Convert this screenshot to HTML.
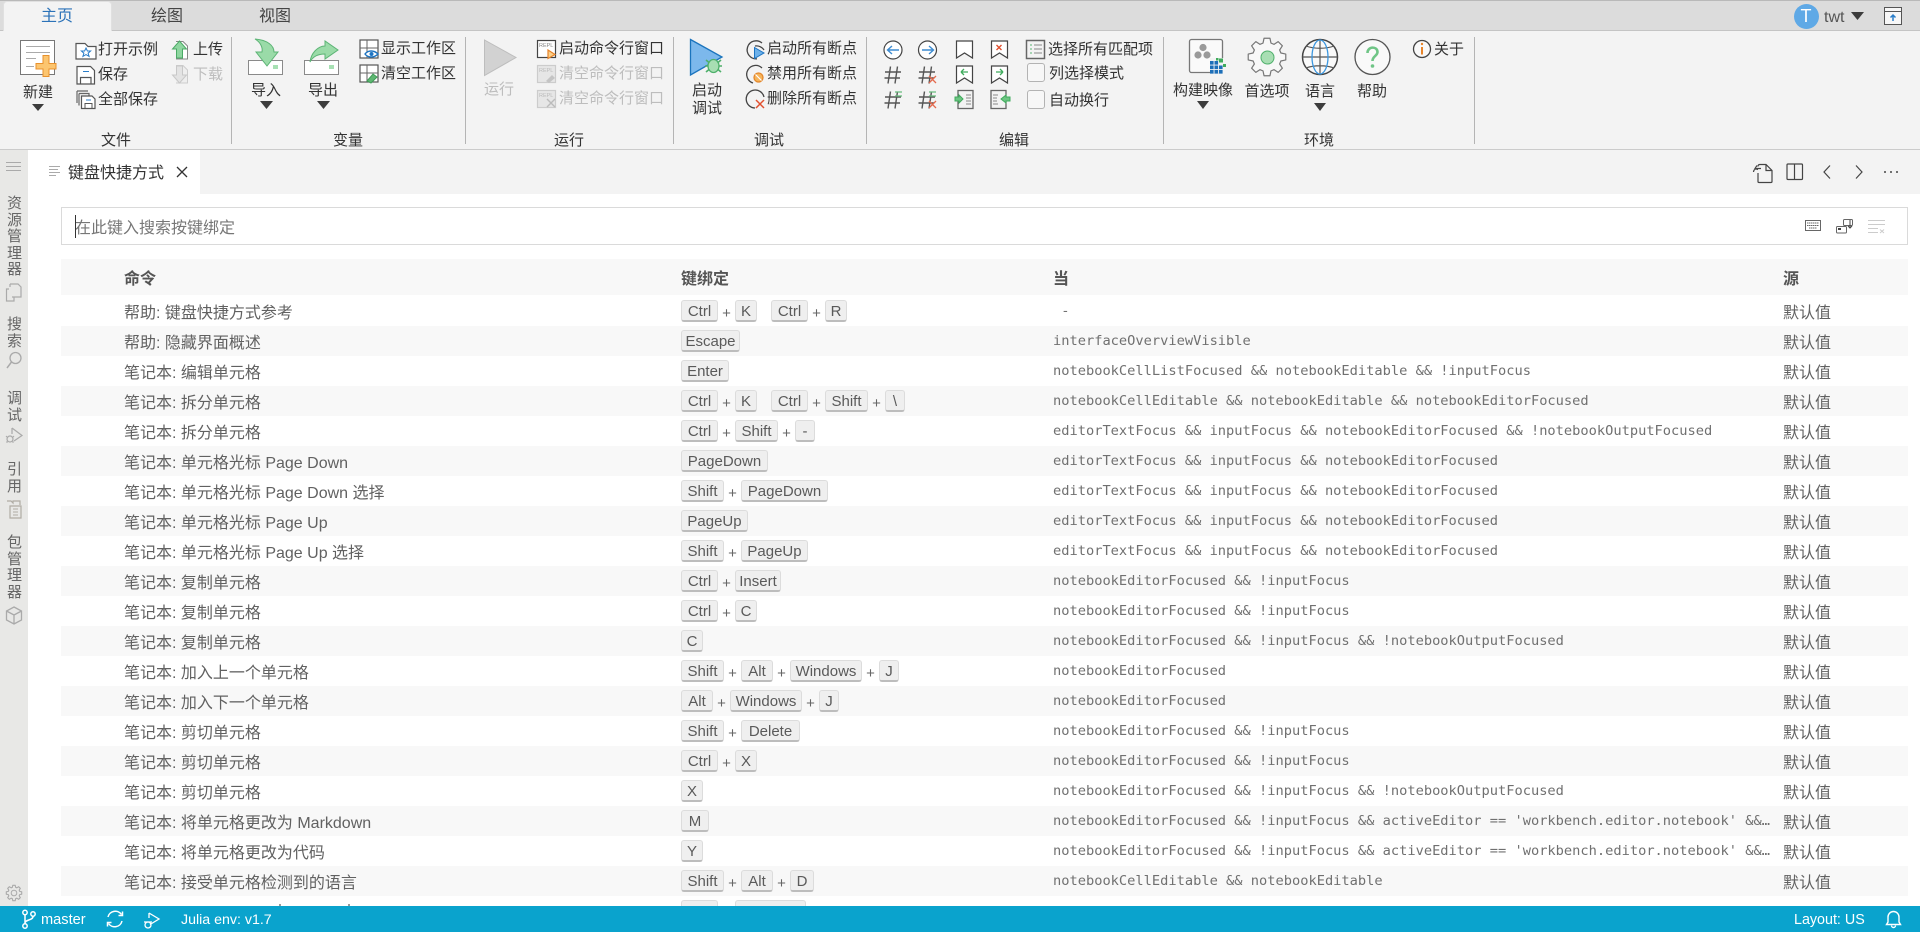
<!DOCTYPE html>
<html lang="zh"><head><meta charset="utf-8"><title>键盘快捷方式</title>
<style>
html,body{margin:0;padding:0;width:1920px;height:932px;overflow:hidden;background:#fff;font-family:"Liberation Sans","Noto Sans CJK SC",sans-serif}
.a{position:absolute}
.t{position:absolute;white-space:nowrap;line-height:20px;height:20px;font-size:15px;color:#333}
.c{transform:translateX(-50%)}
.g{color:#bdbdbd}
.r{position:absolute;left:61px;width:1847px;height:30px;line-height:30px;font-size:16px;color:#616161;overflow:hidden}
.e{background:#f8f8f8}
.r>*{position:absolute;white-space:nowrap}
.n{left:63px;top:3px}
.b{left:620px;top:4px;display:flex;align-items:flex-start}
.w{left:992px;font:13.7px/30px "DejaVu Sans Mono",monospace;color:#707070;white-space:pre!important}
.s{left:1722px;top:3px}
.h{font-weight:bold;color:#555;top:2px}
.k{display:block;box-sizing:border-box;height:22px;line-height:21px;text-align:center;background:#efefef;border:1px solid #dcdcdc;border-bottom:2px solid #bdbdbd;border-radius:3px;font-size:15px;color:#5a5a5a;font-weight:400;font-style:normal}
.p{display:block;width:17px;text-align:center;font-size:15px;line-height:27px;color:#666;font-weight:400;font-style:normal}
.g14{display:block;width:14px}
.v{position:absolute;left:6px;width:17px;text-align:center;font-size:15px;line-height:16.5px;color:#666}
</style></head><body>

<!-- tab strip -->
<div class="a" style="left:0;top:0;width:1920px;height:30px;background:#dcdcdc;border-top:1px solid #b9b9b9;box-sizing:border-box"></div>
<div class="a" style="left:0;top:30px;width:1920px;height:1px;background:#c4c4c4"></div>
<div class="a" style="left:4px;top:2px;width:107px;height:29px;background:#f3f3f3;border-radius:3px 3px 0 0;box-shadow:0 0 0 1px #e0e0e0"></div>
<div class="t c" style="left:57px;top:7px;font-size:16px;color:#2b72b8">主页</div>
<div class="t c" style="left:167px;top:7px;font-size:16px;color:#444">绘图</div>
<div class="t c" style="left:275px;top:7px;font-size:16px;color:#444">视图</div>
<div class="a" style="left:1793.5px;top:4px;width:25px;height:25px;border-radius:50%;background:#5fa9e6;color:#fff;font-size:18px;line-height:25px;text-align:center">T</div>
<div class="t" style="left:1824px;top:8px;font-size:16px;color:#555">twt</div>

<!-- ribbon -->
<div class="a" style="left:0;top:31px;width:1920px;height:118px;background:#f3f3f3"></div>
<div class="a" style="left:0;top:149px;width:1920px;height:1px;background:#cbcbcb"></div>
<div class="a" style="left:231px;top:37px;width:1px;height:107px;background:#b4b4b4"></div>
<div class="a" style="left:465px;top:37px;width:1px;height:107px;background:#b4b4b4"></div>
<div class="a" style="left:673px;top:37px;width:1px;height:107px;background:#b4b4b4"></div>
<div class="a" style="left:866px;top:37px;width:1px;height:107px;background:#b4b4b4"></div>
<div class="a" style="left:1163px;top:37px;width:1px;height:107px;background:#b4b4b4"></div>
<div class="a" style="left:1474px;top:37px;width:1px;height:107px;background:#b4b4b4"></div>

<div class="t c" style="left:38px;top:83px">新建</div>
<div class="t" style="left:98px;top:40px">打开示例</div>
<div class="t" style="left:98px;top:65px">保存</div>
<div class="t" style="left:98px;top:90px">全部保存</div>
<div class="t" style="left:193px;top:40px">上传</div>
<div class="t g" style="left:193px;top:65px">下载</div>
<div class="t c" style="left:116px;top:131px">文件</div>
<div class="t c" style="left:266px;top:81px">导入</div>
<div class="t c" style="left:323px;top:81px">导出</div>
<div class="t" style="left:381px;top:39px">显示工作区</div>
<div class="t" style="left:381px;top:64px">清空工作区</div>
<div class="t c" style="left:348px;top:131px">变量</div>
<div class="t c g" style="left:499px;top:80px">运行</div>
<div class="t" style="left:559px;top:39px">启动命令行窗口</div>
<div class="t g" style="left:559px;top:64px">清空命令行窗口</div>
<div class="t g" style="left:559px;top:89px">清空命令行窗口</div>
<div class="t c" style="left:569px;top:131px">运行</div>
<div class="t c" style="left:707px;top:81px">启动</div>
<div class="t c" style="left:707px;top:99px">调试</div>
<div class="t" style="left:767px;top:39px">启动所有断点</div>
<div class="t" style="left:767px;top:64px">禁用所有断点</div>
<div class="t" style="left:767px;top:89px">删除所有断点</div>
<div class="t c" style="left:769px;top:131px">调试</div>
<div class="t" style="left:1048px;top:40px">选择所有匹配项</div>
<div class="t" style="left:1049px;top:64px">列选择模式</div>
<div class="t" style="left:1049px;top:91px">自动换行</div>
<div class="t c" style="left:1014px;top:131px">编辑</div>
<div class="t c" style="left:1203px;top:81px">构建映像</div>
<div class="t c" style="left:1267px;top:82px">首选项</div>
<div class="t c" style="left:1320px;top:82px">语言</div>
<div class="t c" style="left:1372px;top:82px">帮助</div>
<div class="t" style="left:1434px;top:40px">关于</div>
<div class="t c" style="left:1319px;top:131px">环境</div>

<!-- tab bar -->
<div class="a" style="left:28px;top:150px;width:1892px;height:44px;background:#f3f3f3"></div>
<div class="a" style="left:28px;top:150px;width:172px;height:44px;background:#fff"></div>
<div class="t" style="left:68px;top:164px;font-size:16px;color:#333">键盘快捷方式</div>

<!-- search -->
<div class="a" style="left:61px;top:207px;width:1847px;height:38px;box-sizing:border-box;border:1px solid #dadada;background:#fff"></div>
<div class="t" style="left:75px;top:219px;font-size:16px;color:#777">在此键入搜索按键绑定</div>
<div class="a" style="left:75px;top:215px;width:1px;height:23px;background:#333"></div>

<!-- table -->
<div class="r e" style="top:259px;height:36px;line-height:37px"><span class="n h">命令</span><span class="h" style="left:620px">键绑定</span><span class="h" style="left:992px">当</span><span class="s h">源</span></div>

<div class="r" style="top:296px"><span class="n">帮助: 键盘快捷方式参考</span><span class="b"><b class="k" style="width:37px">Ctrl</b><b class="p">+</b><b class="k" style="width:22px">K</b><i class="g14"></i><b class="k" style="width:37px">Ctrl</b><b class="p">+</b><b class="k" style="width:22px">R</b></span><span class="w"> -</span><span class="s">默认值</span></div>

<div class="r e" style="top:326px"><span class="n">帮助: 隐藏界面概述</span><span class="b"><b class="k" style="width:59px">Escape</b></span><span class="w">interfaceOverviewVisible</span><span class="s">默认值</span></div>

<div class="r" style="top:356px"><span class="n">笔记本: 编辑单元格</span><span class="b"><b class="k" style="width:48px">Enter</b></span><span class="w">notebookCellListFocused &amp;&amp; notebookEditable &amp;&amp; !inputFocus</span><span class="s">默认值</span></div>

<div class="r e" style="top:386px"><span class="n">笔记本: 拆分单元格</span><span class="b"><b class="k" style="width:37px">Ctrl</b><b class="p">+</b><b class="k" style="width:22px">K</b><i class="g14"></i><b class="k" style="width:37px">Ctrl</b><b class="p">+</b><b class="k" style="width:43px">Shift</b><b class="p">+</b><b class="k" style="width:20px">\</b></span><span class="w">notebookCellEditable &amp;&amp; notebookEditable &amp;&amp; notebookEditorFocused</span><span class="s">默认值</span></div>

<div class="r" style="top:416px"><span class="n">笔记本: 拆分单元格</span><span class="b"><b class="k" style="width:37px">Ctrl</b><b class="p">+</b><b class="k" style="width:43px">Shift</b><b class="p">+</b><b class="k" style="width:20px">-</b></span><span class="w">editorTextFocus &amp;&amp; inputFocus &amp;&amp; notebookEditorFocused &amp;&amp; !notebookOutputFocused</span><span class="s">默认值</span></div>

<div class="r e" style="top:446px"><span class="n">笔记本: 单元格光标 Page Down</span><span class="b"><b class="k" style="width:87px">PageDown</b></span><span class="w">editorTextFocus &amp;&amp; inputFocus &amp;&amp; notebookEditorFocused</span><span class="s">默认值</span></div>

<div class="r" style="top:476px"><span class="n">笔记本: 单元格光标 Page Down 选择</span><span class="b"><b class="k" style="width:43px">Shift</b><b class="p">+</b><b class="k" style="width:87px">PageDown</b></span><span class="w">editorTextFocus &amp;&amp; inputFocus &amp;&amp; notebookEditorFocused</span><span class="s">默认值</span></div>

<div class="r e" style="top:506px"><span class="n">笔记本: 单元格光标 Page Up</span><span class="b"><b class="k" style="width:67px">PageUp</b></span><span class="w">editorTextFocus &amp;&amp; inputFocus &amp;&amp; notebookEditorFocused</span><span class="s">默认值</span></div>

<div class="r" style="top:536px"><span class="n">笔记本: 单元格光标 Page Up 选择</span><span class="b"><b class="k" style="width:43px">Shift</b><b class="p">+</b><b class="k" style="width:67px">PageUp</b></span><span class="w">editorTextFocus &amp;&amp; inputFocus &amp;&amp; notebookEditorFocused</span><span class="s">默认值</span></div>

<div class="r e" style="top:566px"><span class="n">笔记本: 复制单元格</span><span class="b"><b class="k" style="width:37px">Ctrl</b><b class="p">+</b><b class="k" style="width:46px">Insert</b></span><span class="w">notebookEditorFocused &amp;&amp; !inputFocus</span><span class="s">默认值</span></div>

<div class="r" style="top:596px"><span class="n">笔记本: 复制单元格</span><span class="b"><b class="k" style="width:37px">Ctrl</b><b class="p">+</b><b class="k" style="width:22px">C</b></span><span class="w">notebookEditorFocused &amp;&amp; !inputFocus</span><span class="s">默认值</span></div>

<div class="r e" style="top:626px"><span class="n">笔记本: 复制单元格</span><span class="b"><b class="k" style="width:22px">C</b></span><span class="w">notebookEditorFocused &amp;&amp; !inputFocus &amp;&amp; !notebookOutputFocused</span><span class="s">默认值</span></div>

<div class="r" style="top:656px"><span class="n">笔记本: 加入上一个单元格</span><span class="b"><b class="k" style="width:43px">Shift</b><b class="p">+</b><b class="k" style="width:32px">Alt</b><b class="p">+</b><b class="k" style="width:72px">Windows</b><b class="p">+</b><b class="k" style="width:20px">J</b></span><span class="w">notebookEditorFocused</span><span class="s">默认值</span></div>

<div class="r e" style="top:686px"><span class="n">笔记本: 加入下一个单元格</span><span class="b"><b class="k" style="width:32px">Alt</b><b class="p">+</b><b class="k" style="width:72px">Windows</b><b class="p">+</b><b class="k" style="width:20px">J</b></span><span class="w">notebookEditorFocused</span><span class="s">默认值</span></div>

<div class="r" style="top:716px"><span class="n">笔记本: 剪切单元格</span><span class="b"><b class="k" style="width:43px">Shift</b><b class="p">+</b><b class="k" style="width:59px">Delete</b></span><span class="w">notebookEditorFocused &amp;&amp; !inputFocus</span><span class="s">默认值</span></div>

<div class="r e" style="top:746px"><span class="n">笔记本: 剪切单元格</span><span class="b"><b class="k" style="width:37px">Ctrl</b><b class="p">+</b><b class="k" style="width:22px">X</b></span><span class="w">notebookEditorFocused &amp;&amp; !inputFocus</span><span class="s">默认值</span></div>

<div class="r" style="top:776px"><span class="n">笔记本: 剪切单元格</span><span class="b"><b class="k" style="width:22px">X</b></span><span class="w">notebookEditorFocused &amp;&amp; !inputFocus &amp;&amp; !notebookOutputFocused</span><span class="s">默认值</span></div>

<div class="r e" style="top:806px"><span class="n">笔记本: 将单元格更改为 Markdown</span><span class="b"><b class="k" style="width:28px">M</b></span><span class="w">notebookEditorFocused &amp;&amp; !inputFocus &amp;&amp; activeEditor == 'workbench.editor.notebook' &amp;&amp;…</span><span class="s">默认值</span></div>

<div class="r" style="top:836px"><span class="n">笔记本: 将单元格更改为代码</span><span class="b"><b class="k" style="width:22px">Y</b></span><span class="w">notebookEditorFocused &amp;&amp; !inputFocus &amp;&amp; activeEditor == 'workbench.editor.notebook' &amp;&amp;…</span><span class="s">默认值</span></div>

<div class="r e" style="top:866px"><span class="n">笔记本: 接受单元格检测到的语言</span><span class="b"><b class="k" style="width:43px">Shift</b><b class="p">+</b><b class="k" style="width:32px">Alt</b><b class="p">+</b><b class="k" style="width:24px">D</b></span><span class="w">notebookCellEditable &amp;&amp; notebookEditable</span><span class="s">默认值</span></div>

<div class="r" style="top:896px"><span class="b"><b class="k" style="width:37px;color:transparent">Ctrl</b><b class="p" style="color:transparent">+</b><b class="k" style="width:71px;color:transparent">Windows</b></span></div>
<div class="a" style="left:279px;top:904px;width:2px;height:2px;background:#999"></div>
<div class="a" style="left:348px;top:904px;width:2px;height:2px;background:#999"></div>

<!-- activity bar -->
<div class="a" style="left:0;top:150px;width:28px;height:756px;background:#e8e8e6"></div>
<div class="v" style="top:196px">资<br>源<br>管<br>理<br>器</div>
<div class="v" style="top:317px">搜<br>索</div>
<div class="v" style="top:391px">调<br>试</div>
<div class="v" style="top:462px">引<br>用</div>
<div class="v" style="top:535px">包<br>管<br>理<br>器</div>

<!-- status bar -->
<div class="a" style="left:0;top:906px;width:1920px;height:26px;background:#0aa3cd"></div>
<div class="t" style="left:41px;top:910px;color:#fff;font-size:14.6px">master</div>
<div class="t" style="left:181px;top:910px;color:#fff;font-size:14.2px">Julia env: v1.7</div>
<div class="t" style="left:1794px;top:910px;color:#fff;font-size:14.3px">Layout: US</div>

<!-- icon overlay -->
<svg class="a" style="left:0;top:0;pointer-events:none" width="1920" height="932" viewBox="0 0 1920 932" fill="none">
<defs>
<g id="hs" stroke="#555" stroke-width="1.4"><path d="M-2.5-8.5L-5 8.5M4.5-8.5L2 8.5M-8-3H8M-8.500 3H7"/></g>
<g id="gr"><polygon stroke-linejoin="round" points="7.3,-2.1 9.88,-1.56 9.88,1.56 7.3,2.1 6.65,3.68 8.09,5.88 5.88,8.09 3.68,6.65 2.1,7.3 1.56,9.88 -1.56,9.88 -2.1,7.3 -3.68,6.65 -5.88,8.09 -8.09,5.88 -6.65,3.68 -7.3,2.1 -9.88,1.56 -9.88,-1.56 -7.3,-2.1 -6.65,-3.68 -8.09,-5.88 -5.88,-8.09 -3.68,-6.65 -2.1,-7.3 -1.56,-9.88 1.56,-9.88 2.1,-7.3 3.68,-6.65 5.88,-8.09 8.09,-5.88 6.65,-3.68" vector-effect="non-scaling-stroke"/></g>
</defs>

<!-- carets -->
<path d="M32 104h12l-6 7zM260 101h13l-6.500 8zM317 101h13l-6.500 8zM1197 101h12l-6 8zM1314 103h12l-6 8zM1851 12h13l-6.500 8z" fill="#3c3c3c"/>

<!-- window icon top-right -->
<rect x="1884.500" y="7.500" width="17" height="17" stroke="#555" fill="#f7f7f7"/><path d="M1885 11.500h16" stroke="#555"/><path d="M1893 21v-6M1890.500 17.500l2.500-2.500 2.500 2.500" stroke="#2a7dc9" stroke-width="1.500"/>

<!-- new -->
<rect x="20.500" y="40.500" width="34" height="34" fill="#fff" stroke="#777"/><path d="M26 46.500h24M26 52.500h24M26 58.500h10M26 66.500h8" stroke="#aaa"/>
<path d="M43 55.500h6v8h7v5.500h-7v7.500h-6v-7.500h-7v-5.500h7z" fill="#fcc56f" stroke="#e8912d"/>

<!-- open sample -->
<path d="M76 43.500h9l3 3h8v12.500H76z" fill="#fff" stroke="#555" stroke-width="1.200"/><path d="M86 48l1.400 3h3.200l-2.500 2.200 1 3.200-3.100-1.800-3.100 1.800 1-3.200-2.500-2.200h3.200z" stroke="#2a7dc9"/>
<!-- save -->
<path d="M77 66.500h13.500l4 4v13.500H77z" fill="#fff" stroke="#555" stroke-width="1.200"/><path d="M83 71.500h6" stroke="#2a7dc9"/><path d="M80.500 84v-6.500h10.500V84" stroke="#555" stroke-width="1.200"/>
<!-- save all -->
<path d="M77 91h11M77 91v12M79 93.500h10v2M79 93.500v12" stroke="#666" stroke-width="1.200"/><path d="M81.500 96h10.500l3 3v9.500H81.500z" fill="#fff" stroke="#555" stroke-width="1.200"/><path d="M86 100h5" stroke="#2a7dc9"/><path d="M85 108.500v-5h7v5" stroke="#555"/>
<!-- upload -->
<path d="M176 41.500h7l4.500 4.500v13h-11.500" fill="#fff" stroke="#888"/><path d="M179.500 41l-7 8h4v9h6v-9h4z" fill="#8fd6a0" stroke="#4bab66"/>
<!-- download -->
<path d="M176 65.500h7l4.500 4.500v13h-11.500" stroke="#ccc" fill="#eee"/><path d="M179.500 83l-7-8h4v-9h6v9h4z" fill="#e3e3e3" stroke="#c8c8c8"/>

<!-- import -->
<rect x="248.500" y="60.500" width="34" height="14" fill="#fff" stroke="#8a8a8a"/><rect x="273" y="65" width="5" height="4" fill="#a7e0b3"/>
<path d="M255 39C268 40 274 46 274 52h4l-11 14-11-14h6C263 47 260 42 255 39z" fill="#9adba8" stroke="#5cb475"/>
<!-- export -->
<rect x="304.500" y="60.500" width="34" height="14" fill="#fff" stroke="#8a8a8a"/><rect x="329" y="65" width="5" height="4" fill="#a7e0b3"/>
<path d="M310 62C311 53 318 46 325 46V41L338 50 325 59V54C319 54 313 56 310 62z" fill="#9adba8" stroke="#5cb475"/>
<!-- show workspace -->
<rect x="360" y="40" width="18" height="18" fill="#fff" stroke="#555" stroke-width="1.200"/><path d="M367 40v18M360 48h18" stroke="#666"/>
<path d="M365 54c3-4 9-4 13 0-4 4-10 4-13 0z" fill="#fff" stroke="#1d74c2" stroke-width="1.400"/><circle cx="371.500" cy="54" r="2" fill="#1d74c2"/>
<!-- clear workspace -->
<rect x="360" y="65" width="18" height="17" fill="#fff" stroke="#555" stroke-width="1.200"/><path d="M367 65v17M360 73h18" stroke="#666"/>
<path d="M373 74l4 3-6 6-4-2z" fill="#5fb672" stroke="#3f9c57"/>

<!-- run -->
<polygon points="484.500,40 516,57.500 484.500,75.500" fill="#d2d2d2" stroke="#bdbdbd"/>
<!-- REPL -->
<rect x="537.500" y="40.500" width="18" height="17" fill="#fff" stroke="#444" stroke-width="1.200"/><text x="539" y="47" font-size="5.500" fill="#888" font-family="Liberation Sans">REPL</text><path d="M548 50l7 4.500-7 4z" fill="#fbd08a" stroke="#e8842a" stroke-width="1.200"/>
<rect x="537.500" y="65.500" width="18" height="17" fill="#e6e6e6" stroke="#ccc" stroke-width="1.200"/><text x="539" y="72" font-size="5.500" fill="#bbb" font-family="Liberation Sans">REPL</text><path d="M546 81l6-6 3 3-6 5z" fill="#c4c4c4"/>
<rect x="537.500" y="90.500" width="18" height="17" fill="#e6e6e6" stroke="#ccc" stroke-width="1.200"/><text x="539" y="97" font-size="5.500" fill="#bbb" font-family="Liberation Sans">REPL</text><path d="M547 99l8 8M555 99l-8 8" stroke="#bbb" stroke-width="1.400"/>

<!-- debug -->
<polygon points="690.500,39.500 722,57 690.500,75" fill="#7cb8ec" stroke="#1b74bd" stroke-width="1.300"/>
<ellipse cx="713.500" cy="66" rx="5.500" ry="6.500" fill="#a8deb3" stroke="#4fb06b" stroke-width="1.300"/><path d="M706 60l3 2.500M721 60l-3 2.500M705 66h3M719 66h3M706 72l3-2.500M721 72l-3-2.500" stroke="#4fb06b" stroke-width="1.600"/>

<!-- breakpoints -->
<path d="M762 43a9 9 0 1 0-5 15.800" stroke="#444" stroke-width="1.300"/><path d="M755 46a9 9 0 0 1 9 4" stroke="#444" stroke-width="1.300"/><path d="M754.500 47.500l9.500 5.500-9.500 5.500z" fill="#6db1ea" stroke="#1d74c2"/>
<path d="M762 68a9 9 0 1 0-9 15" stroke="#444" stroke-width="1.300"/><circle cx="758.500" cy="77.500" r="4.500" fill="#f6b45a" stroke="#e4872b" stroke-width="1.300"/><path d="M755.500 74.500l6 6" stroke="#fff" stroke-width="1.200"/>
<path d="M764 97a9 9 0 1 0-9 11" stroke="#444" stroke-width="1.300"/><path d="M756 100l8 8M764 100l-8 8" stroke="#e1502f" stroke-width="1.500"/>

<!-- nav -->
<circle cx="893" cy="50" r="9" fill="#fff" stroke="#444" stroke-width="1.200"/><path d="M899 50h-11M892 46l-4.500 4 4.500 4" stroke="#3d8bd0" stroke-width="1.400"/>
<circle cx="927.500" cy="50" r="9" fill="#fff" stroke="#444" stroke-width="1.200"/><path d="M922 50h11M929 46l4.500 4-4.500 4" stroke="#3d8bd0" stroke-width="1.400"/>
<use href="#hs" x="893" y="75"/><use href="#hs" x="927" y="75"/><path d="M929 76l7 7M936 76l-7 7" stroke="#e46a4e" stroke-width="1.300"/>
<use href="#hs" x="893" y="100"/><path d="M895 92h7M895 96h7" stroke="#67bd7d" stroke-width="1.300"/>
<use href="#hs" x="927" y="100"/><path d="M929 92h7M929 96h7" stroke="#67bd7d" stroke-width="1.300"/><path d="M929 101l7 7M936 101l-7 7" stroke="#e46a4e" stroke-width="1.300"/>

<!-- bookmarks -->
<g stroke="#444" stroke-width="1.200" fill="#fff">
<path d="M956.500 41h16v17l-8-5-8 5z"/><path d="M991.500 41h16v17l-8-5-8 5z"/>
<path d="M956.500 66h16v17l-8-5-8 5z"/><path d="M991.500 66h16v17l-8-5-8 5z"/>
</g>
<path d="M996.500 45l5 5M1001.500 45l-5 5" stroke="#e1502f" stroke-width="1.400"/>
<path d="M961 72h7M961 72l3-3M961 72l3 3" stroke="#3fab5c" stroke-width="1.300"/><path d="M996 72h7M1003 72l-3-3M1003 72l-3 3" stroke="#3fab5c" stroke-width="1.300"/>
<rect x="958" y="90.500" width="15" height="18" fill="#f3f3f3" stroke="#666" stroke-width="1.300"/><path d="M966 95h5M966 98h5M966 101h5M966 104h5" stroke="#888"/><path d="M955 97h4v-2l4 4-4 4v-2h-4z" fill="#6dc583" stroke="#3fab5c"/>
<rect x="991" y="90.500" width="15" height="18" fill="#f3f3f3" stroke="#666" stroke-width="1.300"/><path d="M993 95h5M993 98h4M993 101h4M993 104h5" stroke="#888"/><path d="M1010 97h-4v-2l-5 4 5 4v-2h4z" fill="#6dc583" stroke="#3fab5c"/>
<rect x="1026.500" y="40.500" width="18" height="18" fill="#f3f3f3" stroke="#666" stroke-width="1.500"/><path d="M1034 45h8M1034 49h8M1034 53h8" stroke="#888"/><path d="M1030 45h2M1030 49h2M1030 53h2" stroke="#5ab673"/>
<rect x="1027.500" y="63.500" width="17" height="18" rx="2.500" fill="#f7f7f7" stroke="#b3b3b3"/>
<rect x="1027.500" y="90.500" width="17" height="18" rx="2.500" fill="#f7f7f7" stroke="#b3b3b3"/>

<!-- build image -->
<rect x="1189.500" y="39.500" width="33" height="33" rx="2" fill="#fafafa" stroke="#777" stroke-width="1.300"/><circle cx="1203" cy="47.500" r="3.600" fill="#9a9a9a"/><circle cx="1198" cy="55" r="3.600" fill="#9a9a9a"/><circle cx="1207" cy="55" r="3.600" fill="#9a9a9a"/>
<rect x="1210" y="58" width="15" height="15" fill="#f3f3f3"/><path d="M1210 61h3.600v3.600h-3.600zM1214.500 61h3.600v3.600h-3.600zM1210 65.500h3.600v3.600h-3.600zM1214.500 65.500h3.600v3.600h-3.600zM1219 65.500h3.600v3.600h-3.600zM1210 70h3.600v3.600h-3.600zM1214.500 70h3.600v3.600h-3.600zM1219 70h3.600v3.600h-3.600z" fill="#1d6fb8"/><path d="M1219 58.500h4v4h-4zM1223 64h3v3h-3zM1216 58h2.500v2.500h-2.500z" fill="#3fab5c"/>
<!-- prefs -->
<g transform="translate(1267 57) scale(1.900)" fill="#f8f8f8" stroke="#777" stroke-width="1.200"><use href="#gr"/></g><circle cx="1267.500" cy="57.500" r="6.500" fill="#a8deb3" stroke="#4fb06b"/>
<!-- globe -->
<circle cx="1320" cy="57" r="17.500" fill="#f9f9f9" stroke="#444" stroke-width="1.500"/><path d="M1320 39.500v35M1302.500 57h35M1306 46c8 3 20 3 28 0M1306 68c8-3 20-3 28 0" stroke="#555" stroke-width="1.200"/><ellipse cx="1320" cy="57" rx="8" ry="17" stroke="#3b97e0" stroke-width="1.300"/>
<!-- help -->
<circle cx="1372.500" cy="57" r="17.500" fill="#f9f9f9" stroke="#555" stroke-width="1.300"/><path d="M1367.500 53c0-7 10-7 10-1 0 4-5 4-5 9" stroke="#6fc586" stroke-width="2.600"/><circle cx="1372.500" cy="66" r="1.800" fill="#6fc586"/>
<!-- about -->
<circle cx="1422" cy="49" r="8.500" fill="#f9f9f9" stroke="#444" stroke-width="1.300"/><path d="M1422 47v7.500" stroke="#e8842a" stroke-width="2"/><circle cx="1422" cy="44" r="1.200" fill="#e8842a"/>

<!-- tab icons -->
<path d="M49 166.500h11M49 169.500h9M49 172.500h11M49 175.500h7" stroke="#aaa"/>
<path d="M177 167l10 10M187 167l-10 10" stroke="#333" stroke-width="1.300"/>
<path d="M1758 173v8.500c0 .5.500 1 1 1h12c.500 0 1-.500 1-1v-11l-6-6h-6c-1 0-2 .500-2 2M1766 164.500v6h6M1761 168.500h-3.500c-1.500 0-4 1-4 3.500M1757 165.500l-2 3 3 1" stroke="#444" stroke-width="1.200"/>
<rect x="1787" y="164" width="15.500" height="15.500" rx="1" stroke="#444" stroke-width="1.200"/><path d="M1794.500 164v15.500" stroke="#444" stroke-width="1.200"/>
<path d="M1830 165.500l-6 6.500 6 6.500M1856 165.500l6 6.500-6 6.500" stroke="#444" stroke-width="1.200"/>
<path d="M1884 172h2M1890 172h2M1896 172h2" stroke="#444" stroke-width="1.600"/>

<!-- search icons -->
<rect x="1805.500" y="220.500" width="15" height="10" fill="#fff" stroke="#666"/><path d="M1807 223h12M1807 225.500h12M1809 228h8" stroke="#666" stroke-dasharray="1.500 .5"/>
<rect x="1836.500" y="226.500" width="10" height="6.500" rx="1" stroke="#666"/><path d="M1838 229h3" stroke="#444" stroke-width="2"/><rect x="1843.500" y="219.500" width="9" height="6" rx="1" stroke="#666"/><path d="M1850 220v8M1848 226l2 2 2-2" stroke="#444"/>
<path d="M1868 220.500h17M1868 224.500h17M1868 228.500h10M1868 232.500h10M1880 229.500l4 3.500M1884 229.500l-4 3.500" stroke="#ccc"/>

<!-- activity icons -->
<path d="M6 162.500h15M6 166.500h15M6 170.500h15" stroke="#aaa"/>
<path d="M10 284h8l3 3v10H12M10 284v3M9 289H6.500v12H14v-4" stroke="#aaa" stroke-width="1.200"/>
<circle cx="15.500" cy="358" r="5.500" stroke="#aaa" stroke-width="1.300"/><path d="M11.500 362l-4.500 6" stroke="#aaa" stroke-width="1.500"/>
<path d="M12 428l10 7.500-8 5.500" stroke="#aaa" stroke-width="1.200"/><path d="M12 428v6" stroke="#aaa" stroke-width="1.200"/><circle cx="10" cy="439" r="3" stroke="#aaa" stroke-width="1.200"/><path d="M6 436l2 2M14 436l-2 2M6 442h2M12 442h2" stroke="#aaa"/>
<path d="M7 501h4l2 2v-2h7v4M10 506h11v12H10z" stroke="#b0aca4" stroke-width="1.200"/><path d="M13 509h5M13 512h5M13 515h5" stroke="#b0aca4"/>
<path d="M14 607l7.500 4v9l-7.500 4-7.500-4v-9zM6.500 611l7.500 4 7.500-4M14 615v9" stroke="#aaa" stroke-width="1.300"/>
<g transform="translate(14 893) scale(.78)" stroke="#aaa" stroke-width="1.100"><use href="#gr"/></g><circle cx="14" cy="893" r="2.800" stroke="#aaa"/>

<!-- status icons -->
<g stroke="#fff" stroke-width="1.500"><circle cx="25" cy="912.500" r="2.200"/><circle cx="25" cy="926" r="2.200"/><circle cx="33" cy="914" r="2.200"/><path d="M25 915v9M33 916.500c0 4-8 3-8 6.500"/></g>
<g stroke="#fff" stroke-width="1.500"><path d="M108 917a7.500 7.500 0 0 1 13.500-2.500M122 921a7.500 7.500 0 0 1-13.500 2.500"/><path d="M122.500 911.500v4h-4M107.500 926.500v-4h4"/></g>
<g stroke="#fff" stroke-width="1.300"><path d="M149 913l10 6-9 5.500M149 913v5"/><circle cx="148" cy="925" r="3"/><path d="M144 922h8"/></g>
<path d="M1888 922v-5a5.500 5.500 0 0 1 11 0v5l1.500 2.500h-14zM1891.500 925.500a2 2 0 0 0 4 0" stroke="#fff" stroke-width="1.400"/>
</svg>
</body></html>
